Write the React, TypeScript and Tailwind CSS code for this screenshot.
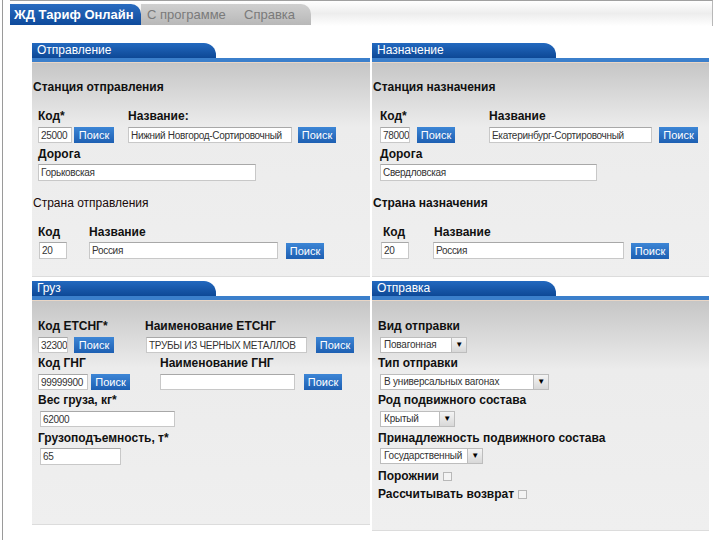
import React from 'react';

const font = { fontFamily: '"Liberation Sans", Arial, sans-serif' };

function Label({ text, w }: { text: string; w?: number }) {
  return (
    <span
      className="block h-[14px] text-[12px] leading-[14px] font-bold text-[#111] whitespace-nowrap shrink-0"
      style={w ? { width: w } : undefined}
    >
      {text}
    </span>
  );
}

function Field({ value, w, h = 16 }: { value?: string; w: number; h?: number }) {
  return (
    <div
      className="bg-white border border-[#c8c8c8] border-t-[#a8a8a8] text-[10px] tracking-[-0.3px] text-[#333] pl-[2px] overflow-hidden whitespace-nowrap flex items-center shrink-0"
      style={{ width: w, height: h }}
    >
      {value}
    </div>
  );
}

function Btn({ w = 40 }: { w?: number }) {
  return (
    <div
      className="h-[16px] bg-gradient-to-b from-[#3d86d6] to-[#1d5fb2] text-white text-[11px] leading-[16px] text-center shrink-0"
      style={{ width: w }}
    >
      Поиск
    </div>
  );
}

function Select({ value, w }: { value: string; w: number }) {
  return (
    <div
      className="h-[16px] bg-white border border-[#bdbdbd] flex items-stretch text-[10px] tracking-[-0.2px] text-[#333]"
      style={{ width: w }}
    >
      <span className="flex-1 pl-[3px] leading-[14px] overflow-hidden whitespace-nowrap">{value}</span>
      <span className="w-[15px] border-l border-[#bdbdbd] bg-gradient-to-b from-[#f4f4f4] to-[#d8d8d8] flex items-center justify-center text-[8px] text-black">
        ▼
      </span>
    </div>
  );
}

function Panel({ title, height, children }: { title: string; height: number; children: React.ReactNode }) {
  return (
    <div className="flex flex-col">
      <div className="w-[184px] h-[15px] rounded-tr-[12px] bg-gradient-to-b from-[#2369bf] to-[#0d4896] text-white text-[12px] leading-[15px] pl-[5px]">
        {title}
      </div>
      <div className="h-[4px] bg-[#3b7fcb]" />
      <div className="h-[1px] bg-[#e9d6c6]" />
      <div
        className="bg-gradient-to-b from-[#c6c6c6] via-[#ececec] via-30% to-[#efefef] border-b border-[#dcdcdc]"
        style={{ height }}
      >
        {children}
      </div>
    </div>
  );
}

export default function App() {
  return (
    <div className="w-[720px] h-[540px] overflow-hidden bg-white" style={font}>
      <div className="ml-[2px] h-[540px] border-l border-[#9a9a9a]">
        <div className="ml-[7px] mr-[7px] border-t border-[#a0a0a0] pt-[3px] bg-gradient-to-b from-white via-[#ededed] to-white h-[26px] border-r border-r-[#b8b8b8]">
          <div className="flex h-[21px]">
            <div className="w-[131px] bg-gradient-to-b from-[#2a6cc0] to-[#0e4a9b] rounded-tr-[10px] text-white text-[13px] font-bold leading-[21px] pl-[4px] whitespace-nowrap">
              ЖД Тариф Онлайн
            </div>
            <div className="w-[100px] bg-gradient-to-b from-[#d0d0d0] to-[#b8b8b8] text-[#7a7a7a] text-[13px] leading-[21px] pl-[6px] whitespace-nowrap">
              С программе
            </div>
            <div className="w-[70px] bg-gradient-to-b from-[#d0d0d0] to-[#b8b8b8] rounded-tr-[10px] text-[#7a7a7a] text-[13px] leading-[21px] pl-[3px] whitespace-nowrap">
              Справка
            </div>
          </div>
        </div>

        <div className="ml-[29px] mt-[17px] grid grid-cols-[338px_337px] gap-x-[2px] gap-y-[4px]">
          <Panel title="Отправление" height={214}>
            <div className="pl-[1px] pt-[17px] flex flex-col">
              <Label text="Станция отправления" />
              <div className="mt-[15px] ml-[5px] flex">
                <Label text="Код*" w={90} />
                <Label text="Название:" />
              </div>
              <div className="mt-[4px] ml-[5px] flex items-center">
                <Field value="25000" w={34} />
                <div className="ml-[2px]"><Btn w={40} /></div>
                <div className="ml-[14px]"><Field value="Нижний Новгород-Сортировочный" w={164} /></div>
                <div className="ml-[6px]"><Btn w={38} /></div>
              </div>
              <div className="mt-[4px] ml-[5px] flex"><Label text="Дорога" /></div>
              <div className="mt-[3px] ml-[5px]"><Field value="Горьковская" w={218} h={17} /></div>
              <div className="mt-[15px] h-[14px] text-[12px] leading-[14px] text-[#1a0a0a]">Страна отправления</div>
              <div className="mt-[15px] ml-[5px] flex">
                <Label text="Код" w={51} />
                <Label text="Название" />
              </div>
              <div className="mt-[3px] ml-[6px] flex items-center">
                <Field value="20" w={28} h={17} />
                <div className="ml-[22px]"><Field value="Россия" w={189} h={17} /></div>
                <div className="ml-[8px]"><Btn w={38} /></div>
              </div>
            </div>
          </Panel>

          <Panel title="Назначение" height={214}>
            <div className="pl-[1px] pt-[17px] flex flex-col">
              <Label text="Станция назначения" />
              <div className="mt-[15px] ml-[7px] flex">
                <Label text="Код*" w={109} />
                <Label text="Название" />
              </div>
              <div className="mt-[4px] ml-[7px] flex items-center">
                <Field value="78000" w={30} />
                <div className="ml-[7px]"><Btn w={38} /></div>
                <div className="ml-[34px]"><Field value="Екатеринбург-Сортировочный" w={163} /></div>
                <div className="ml-[7px]"><Btn w={39} /></div>
              </div>
              <div className="mt-[4px] ml-[7px] flex"><Label text="Дорога" /></div>
              <div className="mt-[3px] ml-[7px]"><Field value="Свердловская" w={217} h={17} /></div>
              <div className="mt-[15px] flex"><Label text="Страна назначения" /></div>
              <div className="mt-[15px] ml-[10px] flex">
                <Label text="Код" w={51} />
                <Label text="Название" />
              </div>
              <div className="mt-[3px] ml-[8px] flex items-center">
                <Field value="20" w={28} h={17} />
                <div className="ml-[24px]"><Field value="Россия" w={191} h={17} /></div>
                <div className="ml-[7px]"><Btn w={38} /></div>
              </div>
            </div>
          </Panel>

          <Panel title="Груз" height={224}>
            <div className="pt-[18px] pl-[6px] flex flex-col">
              <div className="flex">
                <Label text="Код ЕТСНГ*" w={107} />
                <Label text="Наименование ЕТСНГ" />
              </div>
              <div className="mt-[4px] flex items-center">
                <Field value="32300" w={30} />
                <div className="ml-[6px]"><Btn w={40} /></div>
                <div className="ml-[32px]"><Field value="ТРУБЫ ИЗ ЧЕРНЫХ МЕТАЛЛОВ" w={161} /></div>
                <div className="ml-[9px]"><Btn w={38} /></div>
              </div>
              <div className="mt-[3px] flex">
                <Label text="Код ГНГ" w={122} />
                <Label text="Наименование ГНГ" />
              </div>
              <div className="mt-[4px] flex items-center">
                <Field value="99999900" w={50} />
                <div className="ml-[3px]"><Btn w={39} /></div>
                <div className="ml-[30px]"><Field w={135} /></div>
                <div className="ml-[9px]"><Btn w={38} /></div>
              </div>
              <div className="mt-[3px] flex"><Label text="Вес груза, кг*" /></div>
              <div className="mt-[4px] ml-[2px]"><Field value="62000" w={135} /></div>
              <div className="mt-[4px] flex"><Label text="Грузоподъемность, т*" /></div>
              <div className="mt-[3px] ml-[2px]"><Field value="65" w={81} h={17} /></div>
            </div>
          </Panel>

          <Panel title="Отправка" height={230}>
            <div className="pt-[18px] pl-[6px] flex flex-col">
              <Label text="Вид отправки" />
              <div className="mt-[4px] ml-[2px]"><Select value="Повагонная" w={87} /></div>
              <div className="mt-[3px] flex"><Label text="Тип отправки" /></div>
              <div className="mt-[4px] ml-[2px]"><Select value="В универсальных вагонах" w={169} /></div>
              <div className="mt-[3px] flex"><Label text="Род подвижного состава" /></div>
              <div className="mt-[4px] ml-[2px]"><Select value="Крытый" w={75} /></div>
              <div className="mt-[4px] flex"><Label text="Принадлежность подвижного состава" /></div>
              <div className="mt-[3px] ml-[2px]"><Select value="Государственный" w={103} /></div>
              <div className="mt-[5px] flex items-center gap-[4px]">
                <Label text="Порожнии" />
                <span className="w-[9px] h-[9px] border border-[#b8b8b8] bg-[#f4f4f4]" />
              </div>
              <div className="mt-[4px] flex items-center gap-[4px]">
                <Label text="Рассчитывать возврат" />
                <span className="w-[9px] h-[9px] border border-[#b8b8b8] bg-[#f4f4f4]" />
              </div>
            </div>
          </Panel>
        </div>
      </div>
    </div>
  );
}
